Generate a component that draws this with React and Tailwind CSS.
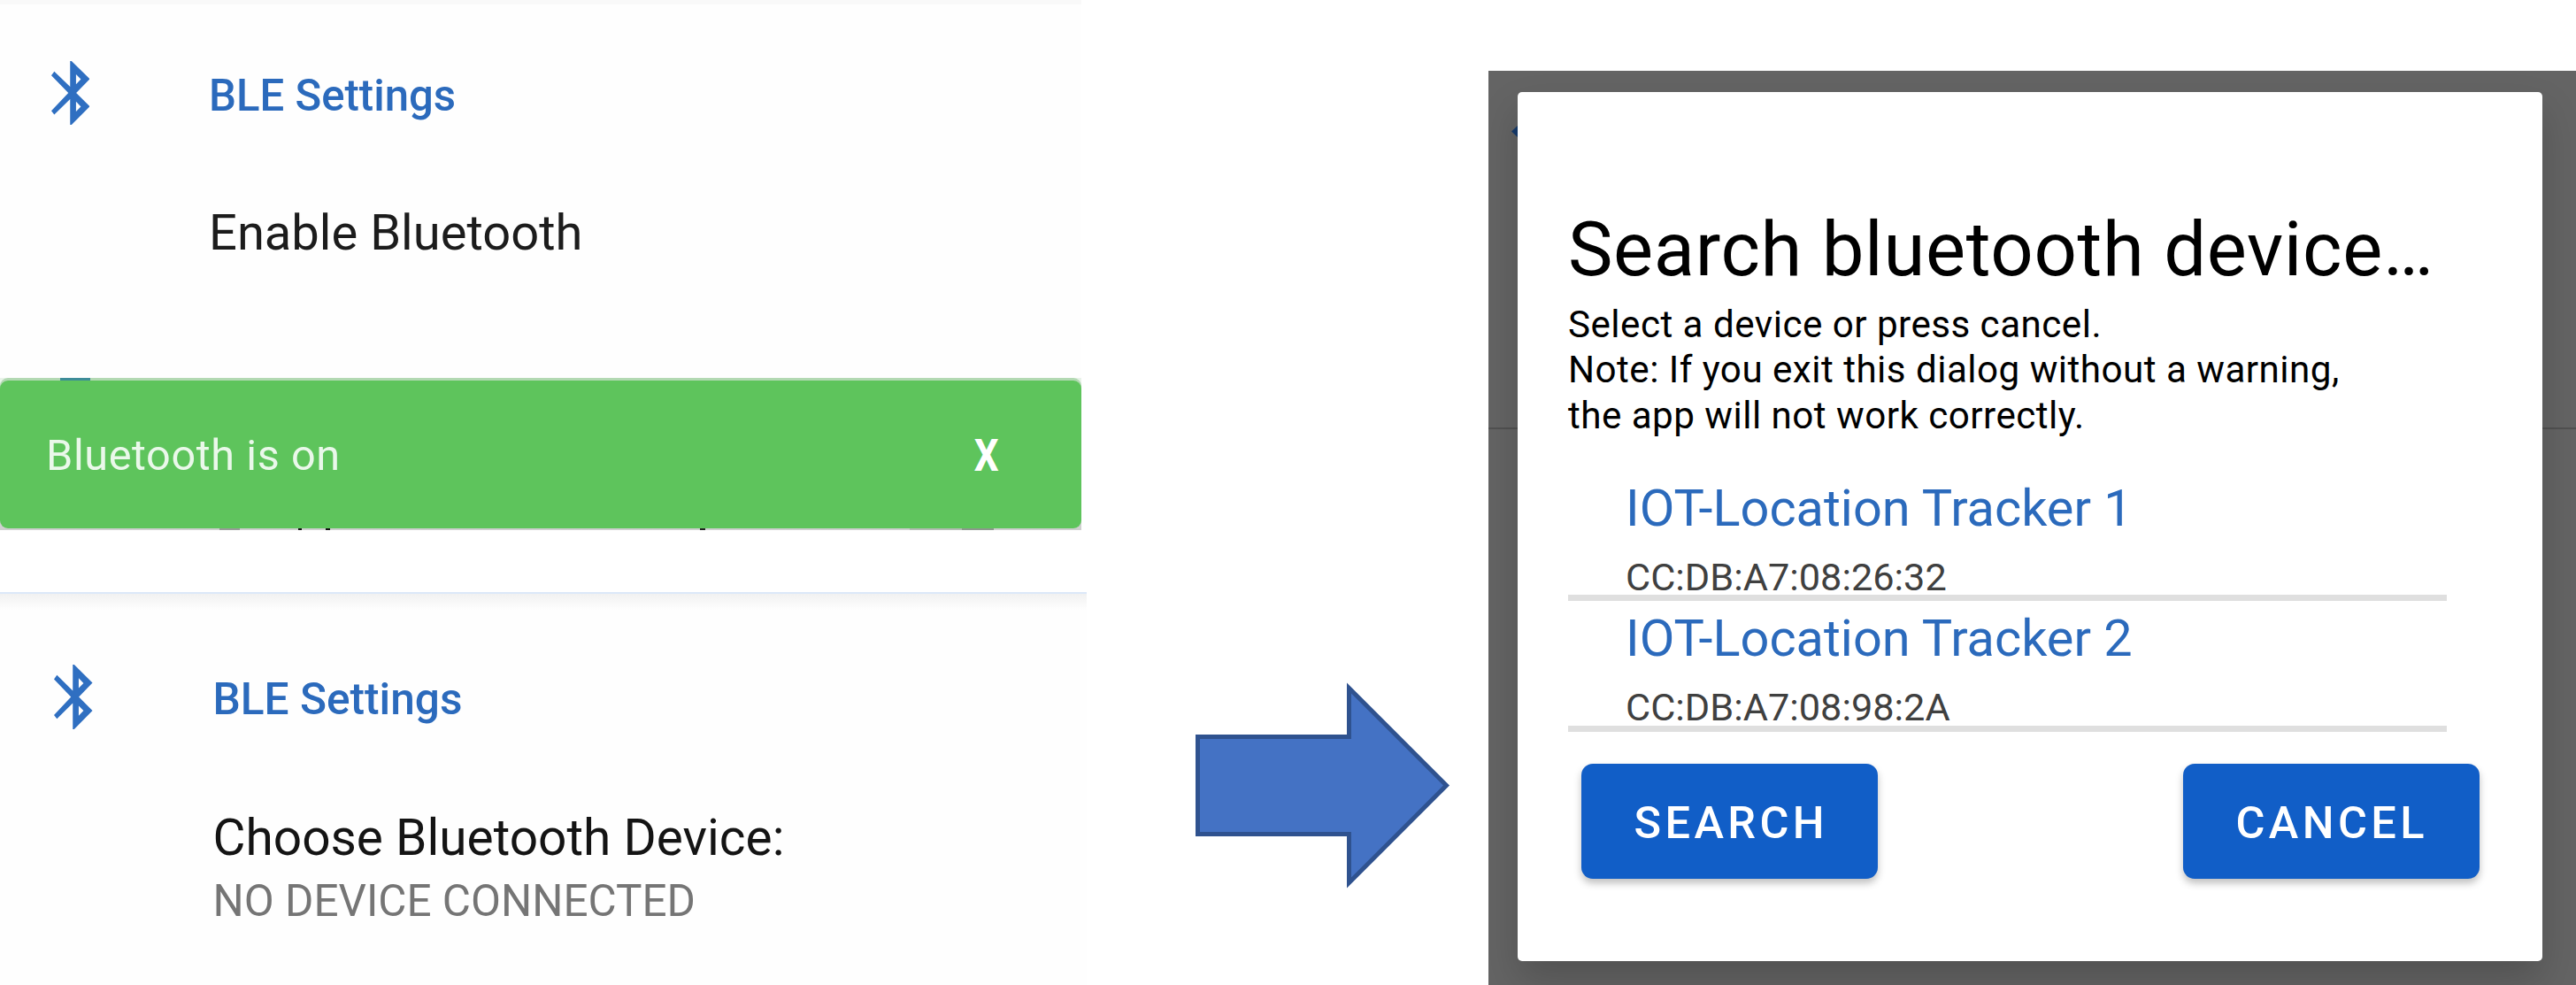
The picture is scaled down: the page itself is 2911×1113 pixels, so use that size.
function BluetoothIcon({ className }) {
  return (
    <svg
      className={className}
      viewBox="58 69 43 72"
      preserveAspectRatio="none"
      fill="currentColor"
      fillRule="evenodd"
    >
      <path d="M79 69h1.6L101 89.3 85.8 105 101 120.3 80.6 141H79V112L61.3 129.5 58 125.3 77 105 58 85.3 61.3 80.7 79 98ZM85.6 84V95.2L91 89.6ZM85.6 114.8V126L91 120.4Z" />
    </svg>
  );
}

function Toast() {
  return (
    <div className="relative h-[172px] w-[1222px] overflow-hidden bg-gradient-to-b from-[#e9f3e9] to-[#cfcfcf]">
      {/* slivers of the rows hidden behind the toast */}
      <div className="absolute inset-x-0 top-0 h-[12px] rounded-t-[9px] bg-[#b3d9b3]" />
      <div className="absolute left-[68px] top-0 h-[3px] w-[34px] bg-[#3d8c98]" />
      <div className="absolute bottom-0 left-[248px] h-[3px] w-[23px] bg-[#999c99]" />
      <div className="absolute bottom-0 left-[337px] h-[3px] w-[4px] bg-[#111]" />
      <div className="absolute bottom-0 left-[368px] h-[3px] w-[5px] bg-[#111]" />
      <div className="absolute bottom-0 left-[791px] h-[3px] w-[6px] bg-[#222]" />
      <div className="absolute bottom-0 left-[1028px] h-[3px] w-[59px] bg-[#b4bcb4]" />
      <div className="absolute bottom-0 left-[1087px] h-[3px] w-[36px] bg-[#8c988c]" />
      <div className="relative mt-[2.5px] flex h-[167.5px] items-start justify-between rounded-[9px] bg-[#5ec45c] pl-[52px] pr-[93px] pt-[55.5px] leading-[60px]">
        <span className="text-[48.6px] tracking-[0.6px] text-[#eaf8ea]">Bluetooth is on</span>
        <span className="origin-right scale-x-[0.88] text-[49.9px] font-bold text-white">X</span>
      </div>
    </div>
  );
}

function Device({ name, address }) {
  return (
    <li className="border-b-[7px] border-[#dfdfdf] pl-[65px] pt-[8px]">
      <div className="h-[68px] text-[57.7px] leading-[68px] text-[#2b6abc]">{name}</div>
      <div className="mt-[25px] h-[39.5px] text-[43.3px] leading-[40px] text-[#3f4040]">{address}</div>
    </li>
  );
}

function DialogButton({ children }) {
  return (
    <button className="h-[130px] w-[335px] rounded-[13px] bg-[#115ec7] pb-[33px] pl-[59.5px] pt-[37px] text-left text-[50.5px] font-medium leading-[60px] tracking-[4.4px] text-white shadow-[0_5px_8px_rgba(0,0,0,0.25)]">
      {children}
    </button>
  );
}

export default function App() {
  return (
    <div className="flex h-[1113px] w-[2911px] overflow-hidden whitespace-nowrap bg-white font-['Roboto',sans-serif]">
      <div className="flex w-[1350px] flex-col">
        <section className="h-[427px] w-[1222px] bg-[#fefefe]">
          <div className="h-[5px] bg-[#f9f9f9]" />
          <div className="flex pl-[57.5px] pt-[64px]">
            <BluetoothIcon className="h-[72px] w-[43.5px] text-[#2f6fc1]" />
            <h2 className="ml-[135px] mt-[9px] text-[49.1px] font-medium leading-[60px] text-[#2b6abc]">
              BLE Settings
            </h2>
          </div>
          <div className="ml-[236px] mt-[87.5px] text-[56.1px] leading-[68px] text-[#1c1c1c]">
            Enable Bluetooth
          </div>
        </section>
        <Toast />
        <section className="mt-[70px] h-[444px] w-[1228px] bg-[#fefefe]">
          <div className="h-[2px] bg-[#dce8f8]" />
          <div className="h-[18px] bg-gradient-to-b from-[#f1f1f1] to-[#fefefe]" />
          <div className="flex pl-[61px] pt-[62px]">
            <BluetoothIcon className="h-[73px] w-[43.5px] text-[#2f6fc1]" />
            <h2 className="ml-[136px] mt-[9px] text-[49.6px] font-medium leading-[60px] text-[#2b6abc]">
              BLE Settings
            </h2>
          </div>
          <div className="ml-[240.5px] mt-[88.5px] text-[56.8px] leading-[68px] text-[#141414]">
            Choose Bluetooth Device:
          </div>
          <div className="ml-[240.5px] mt-[7px] text-[49.4px] leading-[60px] text-[#757575]">
            NO DEVICE CONNECTED
          </div>
        </section>
      </div>

      <div className="w-[332px] pt-[770px]">
        <svg className="h-[235px] w-[292px]" viewBox="1350 770 292 235">
          <path
            d="M1353.5 832.5H1524.5V777.5L1634.5 887.5L1524.5 997.5V942.5H1353.5Z"
            fill="#4472c4"
            stroke="#2f528f"
            strokeWidth="5"
          />
        </svg>
      </div>

      <div className="relative mt-[80px] h-[1033px] w-[1229px] overflow-hidden bg-[#646464] pl-[33px] pt-[23.5px]">
        {/* page behind the dialog: back arrow tip and row separator */}
        <svg className="absolute left-[26px] top-[61px] h-[15px] w-[8px]" viewBox="0 0 8 15">
          <path d="M0 7.5L8 0V15Z" fill="#173b6b" />
        </svg>
        <div className="absolute left-0 top-[403px] h-[2px] w-full bg-[#515151]" />
        <div className="relative h-[982.5px] w-[1158px] rounded-[5px] bg-white pl-[57px] pr-[71px] pt-[128px] shadow-[0_22px_44px_rgba(0,0,0,0.18)]">
          <h1 className="text-[85px] leading-[100px] tracking-[0.65px] text-black">
            Search bluetooth device…
          </h1>
          <p className="mt-[9px] text-[42.2px] leading-[51.5px] tracking-[0.46px] text-black">
            Select a device or press cancel.
            <br />
            Note: If you exit this dialog without a warning,
            <br />
            the app will not work correctly.
          </p>
          <ul className="mt-[36.5px] w-[993px]">
            <Device name="IOT-Location Tracker 1" address="CC:DB:A7:08:26:32" />
            <Device name="IOT-Location Tracker 2" address="CC:DB:A7:08:98:2A" />
          </ul>
          <div className="mt-[36px] flex justify-between pl-[15px]">
            <DialogButton>SEARCH</DialogButton>
            <DialogButton>CANCEL</DialogButton>
          </div>
        </div>
      </div>
    </div>
  );
}
